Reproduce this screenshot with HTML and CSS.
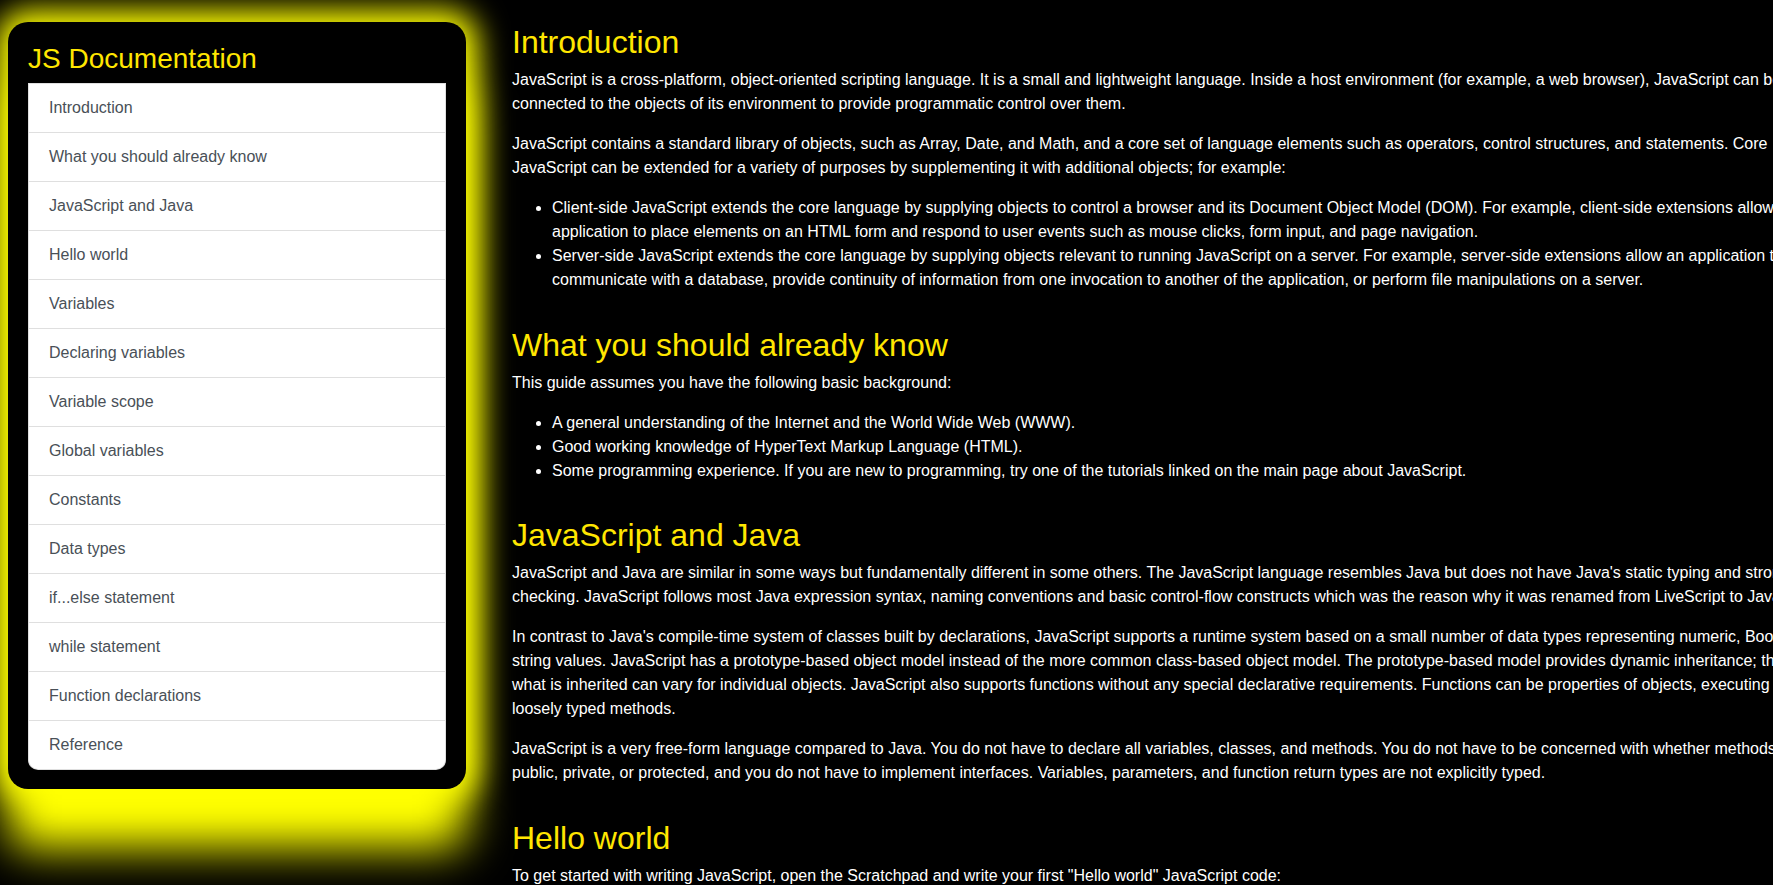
FILE: index.html
```html
<!DOCTYPE html>
<html lang="en">
<head>
<meta charset="utf-8">
<title>JS Documentation</title>
<link rel="stylesheet" href="styles.css">
</head>
<body>
<div class="page">
  <nav class="navbar" id="navbar">
    <header class="nav-title">JS Documentation</header>
    <ul class="nav-list">
      <li><a class="nav-link" href="#Introduction">Introduction</a></li>
      <li><a class="nav-link" href="#What_you_should_already_know">What you should already know</a></li>
      <li><a class="nav-link" href="#JavaScript_and_Java">JavaScript and Java</a></li>
      <li><a class="nav-link" href="#Hello_world">Hello world</a></li>
      <li><a class="nav-link" href="#Variables">Variables</a></li>
      <li><a class="nav-link" href="#Declaring_variables">Declaring variables</a></li>
      <li><a class="nav-link" href="#Variable_scope">Variable scope</a></li>
      <li><a class="nav-link" href="#Global_variables">Global variables</a></li>
      <li><a class="nav-link" href="#Constants">Constants</a></li>
      <li><a class="nav-link" href="#Data_types">Data types</a></li>
      <li><a class="nav-link" href="#if...else_statement">if...else statement</a></li>
      <li><a class="nav-link" href="#while_statement">while statement</a></li>
      <li><a class="nav-link" href="#Function_declarations">Function declarations</a></li>
      <li><a class="nav-link" href="#Reference">Reference</a></li>
    </ul>
  </nav>
  <main class="main-doc" id="main-doc">
    <section class="main-section" id="Introduction">
      <header class="section-title">Introduction</header>
      <p>JavaScript is a cross-platform, object-oriented scripting language. It is a small and lightweight language. Inside a host environment (for example, a web browser), JavaScript can be connected to the objects of its environment to provide programmatic control over them.</p>
      <p>JavaScript contains a standard library of objects, such as Array, Date, and Math, and a core set of language elements such as operators, control structures, and statements. Core JavaScript can be extended for a variety of purposes by supplementing it with additional objects; for example:</p>
      <ul>
        <li>Client-side JavaScript extends the core language by supplying objects to control a browser and its Document Object Model (DOM). For example, client-side extensions allow an application to place elements on an HTML form and respond to user events such as mouse clicks, form input, and page navigation.</li>
        <li>Server-side JavaScript extends the core language by supplying objects relevant to running JavaScript on a server. For example, server-side extensions allow an application to communicate with a database, provide continuity of information from one invocation to another of the application, or perform file manipulations on a server.</li>
      </ul>
    </section>
    <section class="main-section" id="What_you_should_already_know">
      <header class="section-title">What you should already know</header>
      <p>This guide assumes you have the following basic background:</p>
      <ul>
        <li>A general understanding of the Internet and the World Wide Web (WWW).</li>
        <li>Good working knowledge of HyperText Markup Language (HTML).</li>
        <li>Some programming experience. If you are new to programming, try one of the tutorials linked on the main page about JavaScript.</li>
      </ul>
    </section>
    <section class="main-section" id="JavaScript_and_Java">
      <header class="section-title">JavaScript and Java</header>
      <p>JavaScript and Java are similar in some ways but fundamentally different in some others. The JavaScript language resembles Java but does not have Java's static typing and strong type checking. JavaScript follows most Java expression syntax, naming conventions and basic control-flow constructs which was the reason why it was renamed from LiveScript to JavaScript.</p>
      <p>In contrast to Java's compile-time system of classes built by declarations, JavaScript supports a runtime system based on a small number of data types representing numeric, Boolean, and string values. JavaScript has a prototype-based object model instead of the more common class-based object model. The prototype-based model provides dynamic inheritance; that is, what is inherited can vary for individual objects. JavaScript also supports functions without any special declarative requirements. Functions can be properties of objects, executing as loosely typed methods.</p>
      <p>JavaScript is a very free-form language compared to Java. You do not have to declare all variables, classes, and methods. You do not have to be concerned with whether methods are public, private, or protected, and you do not have to implement interfaces. Variables, parameters, and function return types are not explicitly typed.</p>
    </section>
    <section class="main-section" id="Hello_world">
      <header class="section-title">Hello world</header>
      <p>To get started with writing JavaScript, open the Scratchpad and write your first "Hello world" JavaScript code:</p>
      <pre class="code">function greetMe(yourName) { alert("Hello " + yourName); }
greetMe("World");</pre>
    </section>
  </main>
</div>
</body>
</html>
```
FILE: styles.css
```css
html, body {
  margin: 0;
  padding: 0;
  background: #000;
}

body {
  font-family: "Liberation Sans", Arial, sans-serif;
  font-size: 16px;
  line-height: 24px;
  color: #fff;
}

.page {
  display: flex;
  align-items: flex-start;
  width: 1773px;
  height: 885px;
  overflow: hidden;
}

.navbar {
  flex: 0 0 auto;
  width: 418px;
  margin: 22px 0 0 8px;
  padding: 20px 20px 19px;
  background: #000;
  border-radius: 20px;
  box-shadow: 0 0 30px 12px #ffff00, 0 60px 45px 0 #ffff00;
  position: relative;
  z-index: 1;
}

.nav-title {
  font-size: 28px;
  line-height: 33.6px;
  color: #ffe600;
  margin: 0 0 7px;
}

.nav-list {
  list-style: none;
  margin: 0;
  padding: 0;
  background: #fff;
  border: 1px solid rgba(0, 0, 0, 0.125);
  border-radius: 0 0 10px 10px;
  overflow: hidden;
}

.nav-list li + li {
  border-top: 1px solid #dfdfdf;
}

.nav-link {
  display: block;
  padding: 12px 20px;
  color: #495057;
  text-decoration: none;
  line-height: 24px;
}

.main-doc {
  flex: 0 0 auto;
  width: 1332px;
  margin-left: 46px;
  padding-top: 23px;
  display: flex;
  flex-direction: column;
  gap: 17.5px;
}

.section-title {
  display: block;
  font-size: 32px;
  line-height: 38px;
  color: #ffe600;
  margin: 0 0 7px;
}

.main-section p {
  margin: 0 0 16px;
}

.main-section ul {
  margin: 0 0 16px;
  padding-left: 40px;
}

.code {
  margin: 0 0 16px;
  padding: 12px;
  background: #222;
  color: #fff;
  font-family: "Liberation Mono", monospace;
}
```
